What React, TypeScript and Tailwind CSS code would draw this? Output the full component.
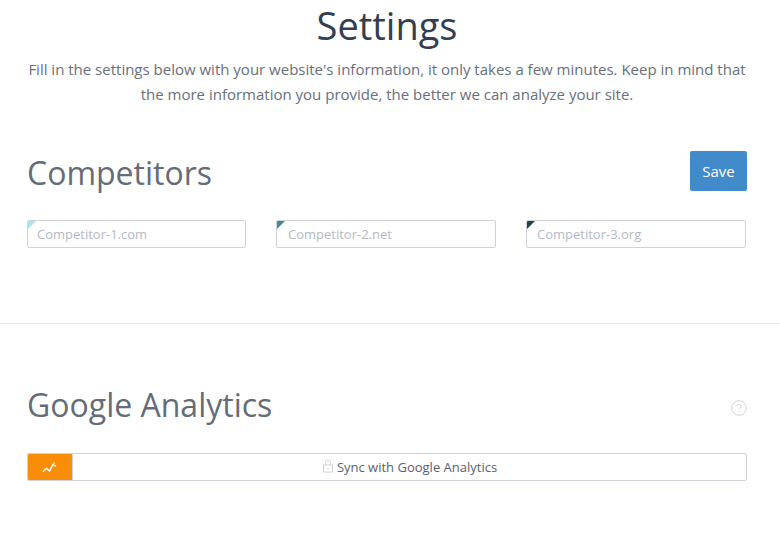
export default function App() {
  const inputs = [
    { p: "Competitor-1.com", c: "border-t-[#a5e6e6]", w: "w-[219px] pl-[9px]" },
    { p: "Competitor-2.net", c: "border-t-[#4a8a8a]", w: "w-[220px] pl-[11px]" },
    { p: "Competitor-3.org", c: "border-t-[#24444a]", w: "w-[220px] pl-[10px]" },
  ];
  return (
    <div className="w-[780px] h-[553px] overflow-hidden bg-white font-['Open_Sans',sans-serif] text-[#5f6874]">
      <div className="px-[27px]">
        <h1 className="-mt-px text-center text-[38px] leading-[52px] text-[#333f50] w-[720px]">Settings</h1>
        <p className="mt-[6px] text-center text-[15px] leading-[25px] text-[#68707c] w-[720px]">
          Fill in the settings below with your website's information, it only takes a few minutes. Keep in mind that
          <br />
          the more information you provide, the better we can analyze your site.
        </p>
        <div className="mt-[44px] flex w-[720px] items-center justify-between h-[40px]">
          <h2 className="mt-[3px] text-[32px] leading-[44px] text-[#646c78]">Competitors</h2>
          <button className="h-[40px] w-[57px] rounded-[2px] bg-[#428bca] pt-[1px] text-[15px] text-white">Save</button>
        </div>
        <div className="mt-[29px] flex gap-[30px]">
          {inputs.map((i) => (
            <div key={i.p} className={`relative h-[28px] ${i.w} overflow-hidden rounded-[2px] border border-[#cfd1dc] text-[13px] leading-[26px] text-[#b4b8c4]`}>
              <span className={`absolute left-[-1px] top-[-1px] h-0 w-0 border-r-[10px] border-t-[10px] border-r-transparent ${i.c}`} />
              {i.p}
            </div>
          ))}
        </div>
      </div>
      <div className="mt-[75px] border-t border-[#e8e9ee]" />
      <div className="px-[27px]">
        <div className="mt-[59px] flex w-[720px] items-center justify-between h-[44px]">
          <h2 className="text-[32px] leading-[44px] text-[#646c78]">Google Analytics</h2>
          <svg className="mt-[5px]" width="16" height="16" viewBox="0 0 16 16" fill="none" stroke="#cfd1dc">
            <circle cx="8" cy="8" r="7.3" />
            <path d="M6 6.3a2 2 0 1 1 3 1.7c-.7.4-1 .8-1 1.6M8 11.2v1" />
          </svg>
        </div>
        <div className="mt-[26px] flex h-[28px] w-[720px] overflow-hidden rounded-[2px] border border-[#cfd1dc]">
          <div className="-my-px -ml-px flex w-[45px] shrink-0 items-center justify-center bg-[#f88d07]">
            <svg width="16" height="11" viewBox="0 0 16 11" fill="none" stroke="white" strokeWidth="1.5">
              <path d="M1 9.5l3.5-3 3 2.5 3.5-6.5 3 2" />
              <path d="M11 1l2 .5" strokeWidth="1" />
            </svg>
          </div>
          <div className="flex flex-1 items-center justify-center border-l border-[#cfd1dc] pt-[1px] text-[13px] text-[#5a626e]">
            <svg className="mr-[3px] mb-[4px]" width="12" height="14" viewBox="0 0 12 14" fill="none" stroke="#d0d2d8">
              <rect x="1.5" y="6" width="9" height="7" />
              <path d="M3.5 6V3.5a2.5 2.5 0 0 1 5 0V6" />
              <path d="M6 9v1.5" />
            </svg>
            Sync with Google Analytics
          </div>
        </div>
      </div>
    </div>
  );
}
